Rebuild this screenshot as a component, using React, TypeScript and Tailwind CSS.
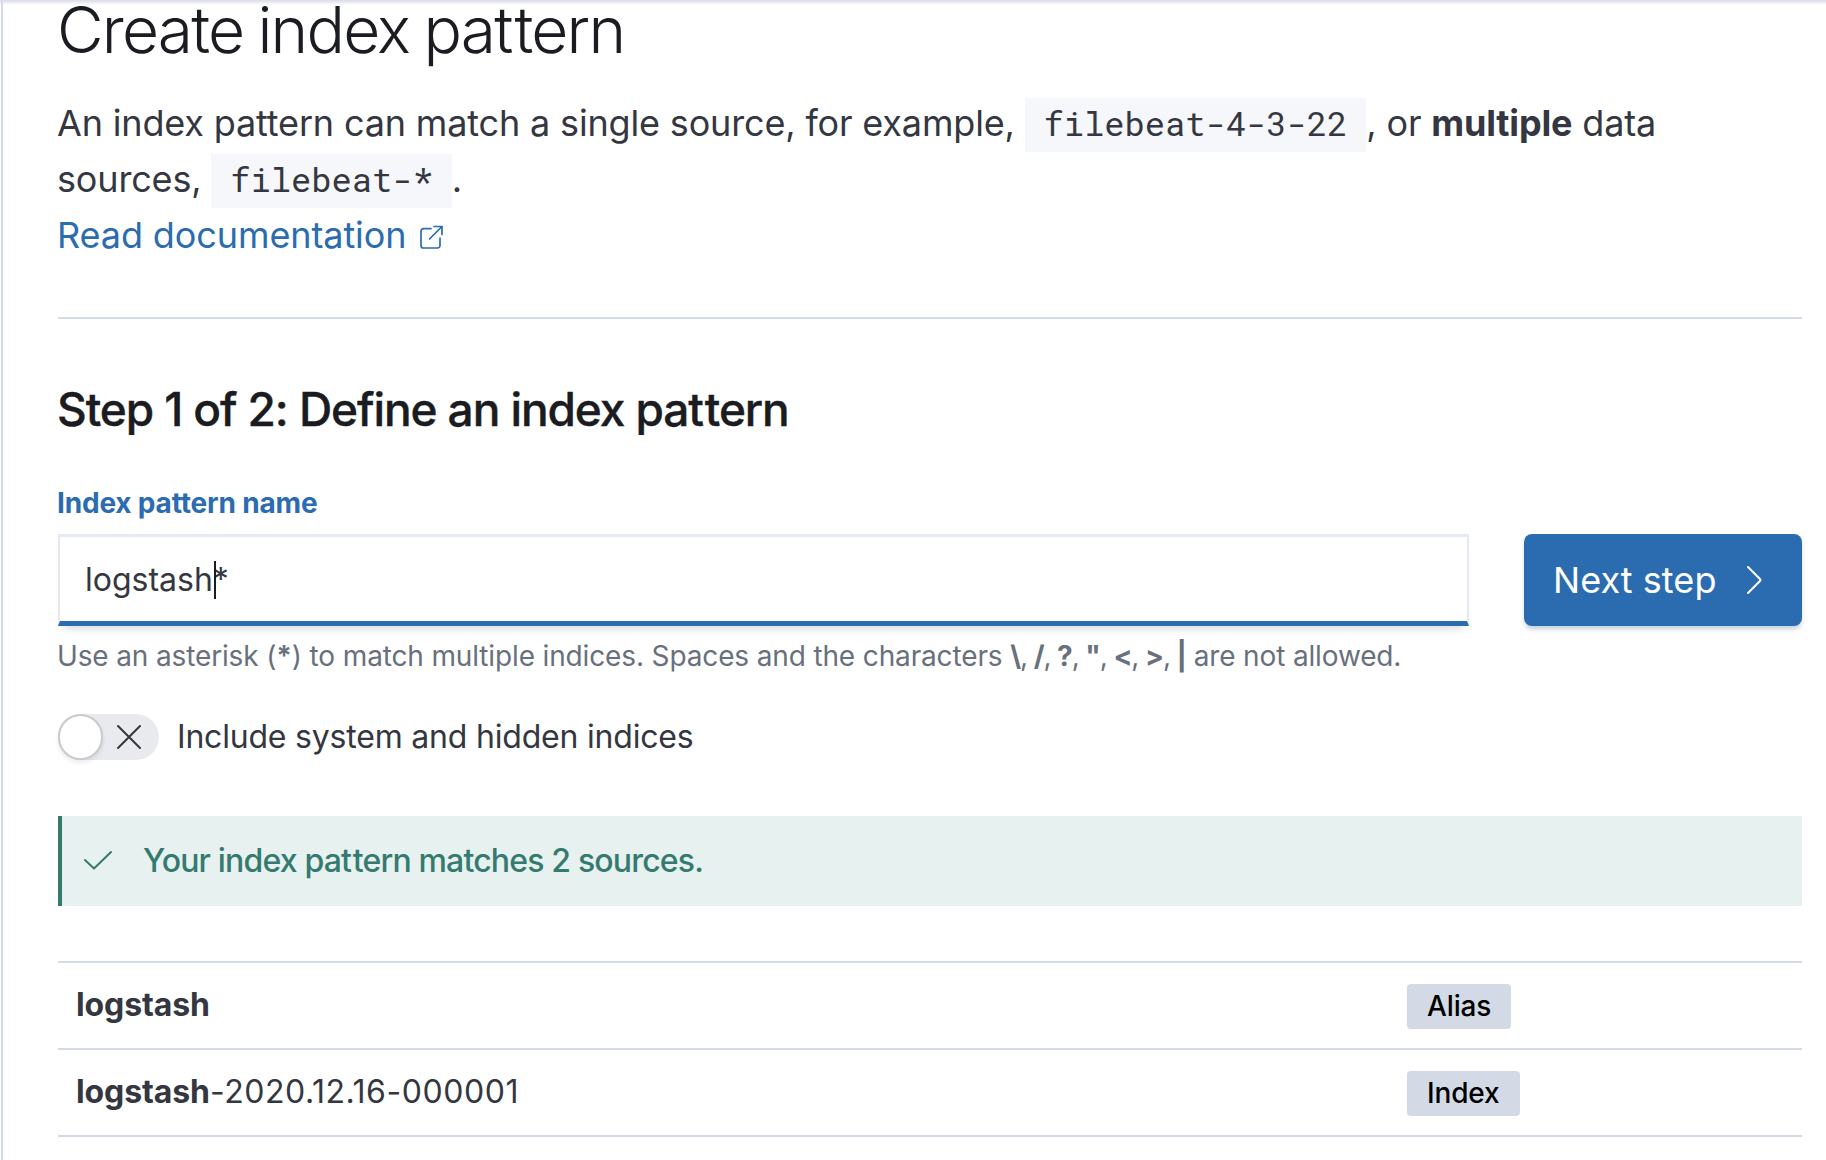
import { Fragment, type ReactNode } from 'react';

const FORBIDDEN = ['\\', '/', '?', '"', '<', '>', '|'];

function Code({ children }: { children: ReactNode }) {
  return (
    <code className="bg-[#f5f7fa] px-[18.7px] pt-[3px] pb-[7px] font-['Roboto_Mono','DejaVu_Sans_Mono',monospace] text-[33.8px] tracking-normal">
      {children}
    </code>
  );
}

function Row({ match, rest, tag }: { match: string; rest?: string; tag: string }) {
  return (
    <div className="flex h-[87px] items-center border-b-2 border-[#d3dae6] pl-[18px]">
      <div className="w-[1331px] pb-px text-[32px] leading-[48px] tracking-[-0.1px]">
        <b className="font-bold">{match}</b>
        <span className="tracking-[0.55px]">{rest}</span>
      </div>
      <span className="mt-[2px] h-[45px] rounded-[4px] bg-[#d3dae6] px-[20px] text-[28px] leading-[45px] font-medium tracking-[-0.14px] text-black">
        {tag}
      </span>
    </div>
  );
}

export default function App() {
  return (
    <div className="relative flex h-[1160px] w-[1826px] bg-white pl-px font-['Inter',sans-serif] text-[#343741] [font-optical-sizing:none]">
      <div className="absolute inset-x-0 top-0 h-[5px] bg-linear-to-b from-[#d9dce6] to-transparent" />
      <div className="w-[2px] shrink-0 bg-[#d3dae6]" />
      <main className="ml-[55px] flex w-[1744px] flex-col whitespace-nowrap">
        <h1 className="-ml-px h-[60px] text-[64px] leading-[60px] font-light tracking-[-1.8px] text-[#1a1c21] [word-spacing:-2px]">
          Create index pa<span className="tracking-[1.3px]">t</span>tern
        </h1>
        <div className="mt-[35px] -ml-px text-[36px] leading-[56px] tracking-[-0.16px]">
          <div className="h-14">
            An index pattern can match a single source, for example, <Code>filebeat-4-3-22</Code>, or{' '}
            <b className="font-bold">multiple</b> data
          </div>
          <div className="h-14">
            sources, <Code>filebeat-*</Code>.
          </div>
          <a className="flex h-14 items-center tracking-[-0.1px] text-[#2b6cb0]">
            Read documentation
            <svg className="mt-[3px] ml-[13px] h-[26px] w-[26px]" viewBox="0 0 26 26" fill="none" stroke="#2b6cb0" strokeWidth="1.7">
              <path d="M12 4.6H4.5A2.5 2.5 0 0 0 2 7.100V21.500A2.500 2.500 0 0 0 4.500 24H18.500A2.500 2.500 0 0 0 21 21.500V14" strokeLinecap="round" />
              <path d="M15 2.500H23V10.500M22.500 3L10.500 15" strokeLinecap="round" />
            </svg>
          </a>
        </div>
        <hr className="mt-[54px] h-[2px] border-0 bg-[#d3dae6]" />
        <h2 className="mt-[62px] -ml-px h-14 text-[46px] leading-[57px] font-medium tracking-[-1.09px] text-[#1a1c21] [-webkit-text-stroke:0.4px_#1a1c21]">
          Step 1 of 2: Define an index pa<span className="tracking-[0.8px]">t</span>tern
        </h2>
        <label className="mt-[49px] -ml-px h-[34px] text-[28px] leading-[34px] font-bold tracking-[-0.18px] text-[#2b6cb0]">
          Index pattern name
        </label>
        <div className="mt-[14px] flex h-[92px] justify-between">
          <div className="flex w-[1411px] items-center border-x-2 border-t-[3px] border-b-[5px] border-x-[#e5e9f2] border-t-[#e5e9f2] border-b-[#2b6cb0] pt-[2px] pl-[25px] text-[32px] shadow-[0_8px_8px_-6px_rgba(50,50,70,0.2)]">
            logstash
            <span className="relative">
              <span className="absolute top-[5px] left-px h-[38px] w-[2px] bg-[#1a1c21]" />*
            </span>
          </div>
          <button className="flex w-[278px] items-center rounded-lg bg-[#2b6cb0] pl-[29px] text-[36px] tracking-[0.05px] text-white shadow-[0_4px_5px_-1px_rgba(54,97,126,0.3)]">
            Next step
            <svg className="ml-[30px] h-[30px] w-[17px]" viewBox="0 0 17 30" fill="none" stroke="white" strokeWidth="2">
              <path d="M2 2L14 14Q15 15 14 16L2 28" strokeLinecap="round" />
            </svg>
          </button>
        </div>
        <p className="mt-[9px] -ml-px h-[42px] text-[28px] leading-[42px] tracking-[-0.14px] text-[#69707d]">
          Use an asterisk (<b className="font-bold">*</b>) to match multiple indices. Spaces and the characters{' '}
          <span className="tracking-[-1.12px]">
            {FORBIDDEN.map((char, i) => (
              <Fragment key={char}>
                {i > 0 && ', '}
                <b className="font-bold">{char}</b>
              </Fragment>
            ))}
          </span>{' '}
          are not allowed.
        </p>
        <div className="mt-[37px] flex h-[46px] items-center text-[32px] leading-[46px] tracking-[-0.2px]">
          <div className="flex h-[46px] w-[101px] items-center rounded-full bg-[#e9eaee]">
            <div className="h-[46px] w-[45px] rounded-full border-2 border-[#c9cacd] bg-white shadow-[0_3px_4px_rgba(0,0,0,0.08)]" />
            <svg className="ml-[13px] h-[26px] w-[26px]" viewBox="0 0 26 26" stroke="#343741" strokeWidth="2" strokeLinecap="round">
              <path d="M2 2L24 24M24 2L2 24" />
            </svg>
          </div>
          <span className="ml-[18px]">Include system and hidden indices</span>
        </div>
        <div className="mt-[56px] flex h-[90px] items-center border-l-4 border-[#357a6f] bg-[#e7f1f0] pl-[21px] text-[32px] font-medium tracking-[-0.83px] text-[#357a6f]">
          <svg className="h-[24px] w-[30px]" viewBox="0 0 30 24" fill="none" stroke="#357a6f" strokeWidth="2" strokeLinecap="round" strokeLinejoin="round">
            <path d="M2 11L11 19.500L28 3" />
          </svg>
          <span className="ml-[30px]">
            Your index pa<span className="tracking-[0.8px]">t</span>tern matches 2 sources.
          </span>
        </div>
        <div className="mt-[55px] border-t-2 border-[#d3dae6]">
          <Row match="logstash" tag="Alias" />
          <Row match="logstash" rest="-2020.12.16-000001" tag="Index" />
        </div>
      </main>
    </div>
  );
}
